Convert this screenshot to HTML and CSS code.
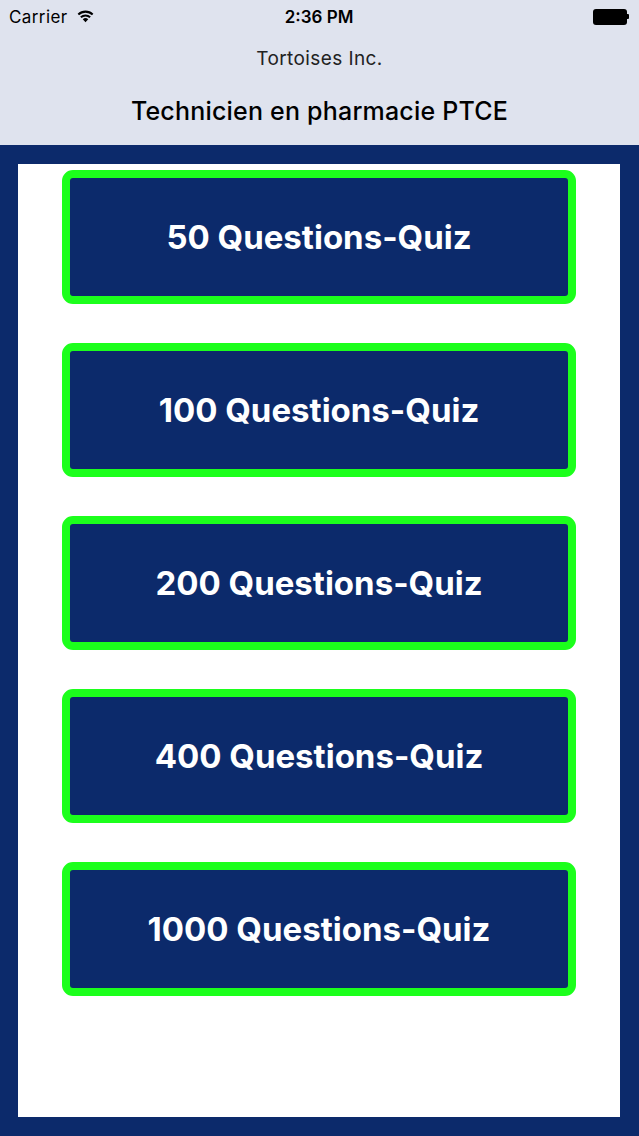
FILE: index.html
```html
<!DOCTYPE html>
<html lang="en">
<head>
	<meta charset="UTF-8">
	<title>Technicien en pharmacie PTCE</title>
	<link rel="stylesheet" href="styles.css">
</head>
<body>
<div class="top">
	<div class="status">
		<div class="carrier">
			Carrier
			<svg class="wifi" width="19" height="14" viewBox="0 0 18 13">
				<path d="M9 12.5 L6.4 9.6 A3.8 3.8 0 0 1 11.6 9.6 Z" fill="#000"/>
				<path d="M4.6 7.7 A6.4 6.4 0 0 1 13.4 7.7" fill="none" stroke="#000" stroke-width="1.9"/>
				<path d="M2.2 5.1 A9.8 9.8 0 0 1 15.8 5.1" fill="none" stroke="#000" stroke-width="1.9"/>
			</svg>
		</div>
		<div class="time">2:36 PM</div>
		<div class="battery"><span class="cell"></span><span class="nub"></span></div>
	</div>
	<p class="company">Tortoises Inc.</p>
	<h1 class="title">Technicien en pharmacie PTCE</h1>
</div>
<div class="main">
	<div class="panel">
		<a class="quiz" href="#">50 Questions-Quiz</a>
		<a class="quiz" href="#">100 Questions-Quiz</a>
		<a class="quiz" href="#">200 Questions-Quiz</a>
		<a class="quiz" href="#">400 Questions-Quiz</a>
		<a class="quiz" href="#">1000 Questions-Quiz</a>
	</div>
</div>
</body>
</html>
```

FILE: styles.css
```css
*{
	padding: 0;
	margin: 0;
	box-sizing: border-box;
}
html,body{
	height: 100%;
}
body{
	font-family: Inter, "Liberation Sans", sans-serif;
	display: flex;
	flex-direction: column;
	background-color: #0c2a6b;
}
.top{
	height: 145px;
	background-color: #dfe3ee;
}
.status{
	height: 33px;
	display: flex;
	align-items: center;
	justify-content: space-between;
	padding: 0 10px 0 9px;
	font-size: 17px;
	color: #000;
}
.carrier{
	flex: 1;
	display: flex;
	align-items: center;
	gap: 8px;
	letter-spacing: 0.4px;
}
.wifi{
	margin-top: -2px;
}
.time{
	font-weight: 600;
	font-size: 17px;
}
.battery{
	flex: 1;
	display: flex;
	justify-content: flex-end;
	align-items: center;
}
.battery .cell{
	width: 34px;
	height: 16px;
	background-color: #000;
	border-radius: 3px;
}
.battery .nub{
	width: 2px;
	height: 5px;
	background-color: #000;
	border-radius: 0 1px 1px 0;
}
.company{
	text-align: center;
	font-size: 19px;
	letter-spacing: 0.4px;
	color: #222;
	line-height: 24px;
	margin-top: 14px;
}
.title{
	text-align: center;
	font-size: 25px;
	font-weight: 500;
	letter-spacing: 0.2px;
	color: #000;
	line-height: 30px;
	margin-top: 25px;
}
.main{
	flex: 1;
	padding: 19px 19px 19px 18px;
	display: flex;
}
.panel{
	flex: 1;
	background-color: #fff;
	display: flex;
	flex-direction: column;
	align-items: center;
	gap: 39px;
	padding-top: 6px;
}
.quiz{
	width: 514px;
	height: 134px;
	border: 8px solid #1cff1c;
	border-radius: 11px;
	background-color: #0c2a6b;
	color: #fff;
	text-decoration: none;
	font-size: 33px;
	font-weight: 700;
	display: flex;
	align-items: center;
	justify-content: center;
}
```
